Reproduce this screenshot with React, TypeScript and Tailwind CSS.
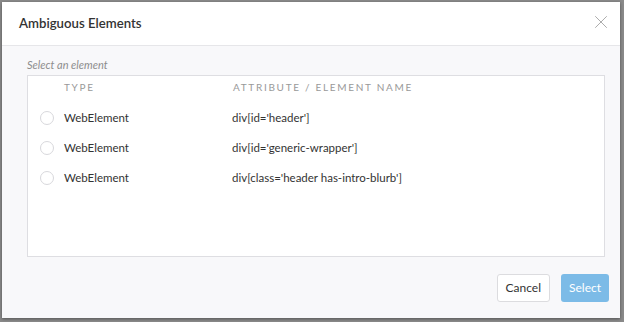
import { X } from "lucide-react";

const rows = [
  { type: "WebElement", name: "div[id='header']" },
  { type: "WebElement", name: "div[id='generic-wrapper']" },
  { type: "WebElement", name: "div[class='header has-intro-blurb']" },
];

export default function App() {
  return (
    <div className="h-[322px] w-[624px] bg-[#8a8a8a] pt-[2px] pl-[2px] pr-[4px] pb-[4px] font-['Lato','Liberation_Sans',sans-serif]">
      <div className="flex h-full flex-col bg-[#f8f8fa] shadow-[0_1px_3px_rgba(0,0,0,0.4)]">
        <header className="flex h-[44px] items-center justify-between border-b border-[#e6e6e9] bg-white pl-[17px] pr-[8px]">
          <h1 className="text-[13.2px] font-semibold text-[#333]">Ambiguous Elements</h1>
          <button className="-mt-[4px] text-[#9a9a9a]">
            <X size={22} strokeWidth={0.9} />
          </button>
        </header>

        <section className="flex flex-1 flex-col pl-[25px] pr-[15px] pt-[11px]">
          <p className="text-[11px] italic text-[#8d8d8d]">Select an element</p>
          <div className="mt-[1px] h-[182px] border border-[#dedee2] bg-white">
            <div className="flex pt-[4px] text-[10px] tracking-[0.17em] text-[#999]">
              <span className="w-[205px] pl-[36px]">TYPE</span>
              <span>ATTRIBUTE / ELEMENT NAME</span>
            </div>
            <div className="mt-[13px] flex flex-col gap-[10px]">
              {rows.map((r) => (
                <label key={r.name} className="flex h-[20px] items-center text-[11.5px] text-[#333]">
                  <span className="ml-[12px] h-[14px] w-[14px] rounded-full border border-[#d8d8dc] bg-white" />
                  <span className="w-[178px] pl-[10px]">{r.type}</span>
                  <span>{r.name}</span>
                </label>
              ))}
            </div>
          </div>
        </section>

        <footer className="flex justify-end gap-[11px] pr-[11px] pb-[16px]">
          <button className="h-[28px] rounded-[3px] border border-[#dcdcdf] bg-white px-[8px] text-[12px] text-[#333]">
            Cancel
          </button>
          <button className="h-[28px] rounded-[3px] bg-[#7cbbe7] px-[8px] text-[12px] text-white">
            Select
          </button>
        </footer>
      </div>
    </div>
  );
}
